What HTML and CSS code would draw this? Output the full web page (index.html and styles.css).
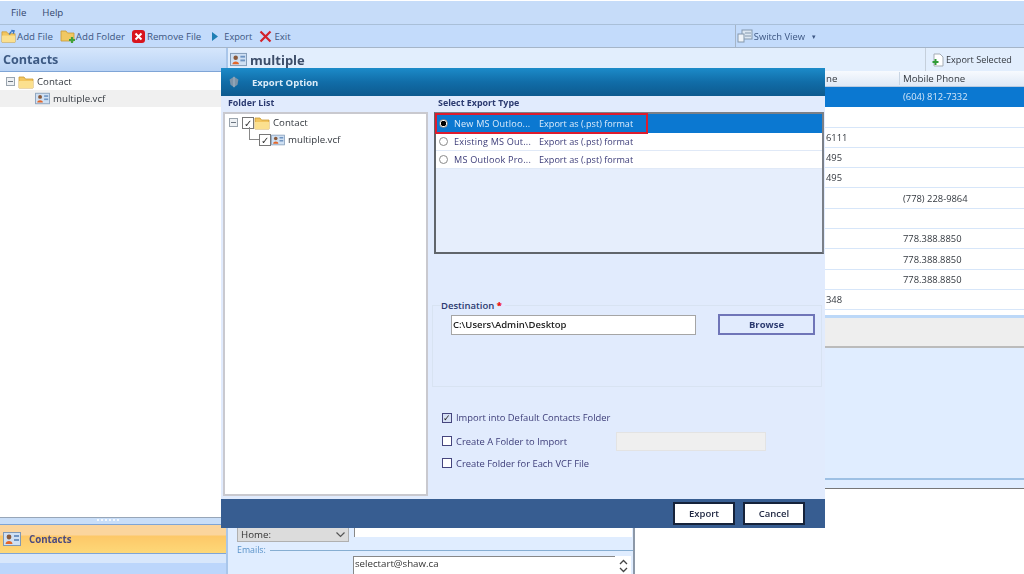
FILE: index.html
```html
<!DOCTYPE html>
<html lang="en">
<head>
<meta charset="utf-8">
<title>Export Option</title>
<link rel="stylesheet" href="styles.css">
</head>
<body>
<svg class="defs" width="0" height="0" aria-hidden="true">
  <defs>
    <symbol id="folder" viewBox="0 0 16 14"><path d="M1 2h5l1.500 2H15v9H1z" fill="#f3c65f" stroke="#c99a35" stroke-width=".8"/><path d="M1 6h14v7H1z" fill="#fbe08f"/></symbol>
    <symbol id="card" viewBox="0 0 18 16"><rect x=".5" y="1.500" width="17" height="13" fill="#cfe0f3" stroke="#7f98b5"/><rect x="11" y="4" width="5" height="2" fill="#6f94c2"/><rect x="11" y="8" width="5" height="2" fill="#6f94c2"/><circle cx="6" cy="6" r="2.400" fill="#8a5a3c"/><path d="M2.500 13c0-4 7-4 7 0z" fill="#e2662a"/></symbol>
  </defs>
</svg>

<nav class="menubar"><span>File</span><span>Help</span></nav>

<div class="toolbar">
  <span class="tool"><svg width="15" height="15" viewBox="0 0 16 14"><use href="#folder"/><path d="M9 5c1-3 3-4 5-4M11 .5l3 .5-1 3" fill="none" stroke="#3a76c4" stroke-width="1.400"/></svg>Add File</span>
  <span class="tool tool-folder"><svg width="16" height="16" viewBox="0 0 16 16"><path d="M1 3h5l1.500 2H14v8H1z" fill="#f1c862" stroke="#c99a35" stroke-width=".8"/><path d="M12 9v6M9 12h6" stroke="#3fa33c" stroke-width="2.200"/></svg>Add Folder</span>
  <span class="tool tool-remove"><svg width="13" height="13" viewBox="0 0 13 13"><rect width="13" height="13" rx="3" fill="#d8141d"/><path d="M3.500 3.500l6 6M9.500 3.500l-6 6" stroke="#fff" stroke-width="2"/></svg>Remove File</span>
  <span class="tool tool-export"><svg width="6" height="9" viewBox="0 0 6 9"><path d="M0 0l6 4.500L0 9z" fill="#1f7fb5"/></svg>Export</span>
  <span class="tool tool-exit"><svg width="13" height="13" viewBox="0 0 13 13"><path d="M1.500 1.500l10 10M11.500 1.500l-10 10" stroke="#d3222a" stroke-width="2.200"/></svg>Exit</span>
  <span class="switch"><svg width="16" height="14" viewBox="0 0 16 14"><rect x="5" y="1" width="10" height="9" fill="#dce7f2" stroke="#8498ad"/><rect x="1" y="5" width="6" height="8" fill="#eef3f8" stroke="#8498ad"/><path d="M8 4h6M8 7h6" stroke="#8498ad"/></svg>Switch View<i class="caret">▾</i></span>
</div>

<main class="workspace">
  <aside class="sidebar">
    <h2 class="side-title">Contacts</h2>
    <div class="side-tree">
      <div class="side-row"><i class="expander"></i><svg width="16" height="14"><use href="#folder"/></svg>Contact</div>
      <div class="side-row side-row-sel"><svg width="15" height="13"><use href="#card"/></svg>multiple.vcf</div>
    </div>
    <div class="splitter"><i></i></div>
    <div class="side-tab"><svg width="18" height="16"><use href="#card"/></svg>Contacts</div>
    <div class="side-strip"></div>
  </aside>

  <section class="content">
    <header class="content-head">
      <h2><svg width="17" height="15"><use href="#card"/></svg>multiple</h2>
      <span class="export-selected"><svg width="13" height="14" viewBox="0 0 13 14"><path d="M2 1h6l3 3v9H2z" fill="#fff" stroke="#a5adb5"/><path d="M3.500 6v6M.500 9h6" stroke="#2f9b37" stroke-width="2"/></svg>Export Selected</span>
    </header>
    <div class="grid-area">
      <div class="grid-head"><span class="col-a">ne</span><span class="col-b">Mobile Phone</span></div>
      <div class="grid-row grid-row-sel"><span class="col-a"></span><span class="col-b">(604) 812-7332</span></div>
      <div class="grid-row"><span class="col-a"></span><span class="col-b"></span></div>
      <div class="grid-row"><span class="col-a">6111</span><span class="col-b"></span></div>
      <div class="grid-row"><span class="col-a">495</span><span class="col-b"></span></div>
      <div class="grid-row"><span class="col-a">495</span><span class="col-b"></span></div>
      <div class="grid-row"><span class="col-a"></span><span class="col-b">(778) 228-9864</span></div>
      <div class="grid-row"><span class="col-a"></span><span class="col-b"></span></div>
      <div class="grid-row"><span class="col-a"></span><span class="col-b">778.388.8850</span></div>
      <div class="grid-row"><span class="col-a"></span><span class="col-b">778.388.8850</span></div>
      <div class="grid-row"><span class="col-a"></span><span class="col-b">778.388.8850</span></div>
      <div class="grid-row"><span class="col-a">348</span><span class="col-b"></span></div>
      <div class="grid-gap"></div>
      <div class="grid-band"></div>
      <div class="grid-blue"></div>
      <div class="grid-foot"></div>
    </div>
    <div class="detail">
      <div class="detail-form">
        <div class="detail-home"><span class="home-select">Home:<svg width="9" height="6" viewBox="0 0 9 6"><path d="M.5.500l4 4 4-4" fill="none" stroke="#555" stroke-width="1.200"/></svg></span><span class="home-input"></span></div>
        <div class="emails"><span>Emails:</span><i></i></div>
        <div class="email-row"><span class="email-box">selectart@shaw.ca</span><span class="spin"><svg width="9" height="14" viewBox="0 0 9 14"><path d="M1 5l3.500-3.500L8 5M1 9l3.500 3.500L8 9" fill="none" stroke="#444" stroke-width="1.300"/></svg></span></div>
      </div>
    </div>
  </section>
</main>

<div class="dialog">
  <div class="dialog-title"><svg width="14" height="16" viewBox="0 0 16 16"><path d="M3 5l5-3 5 3-1 6-4 3-4-3z" fill="#7d93a8"/><path d="M8 2v12" stroke="#a9bac9"/></svg>Export Option</div>
  <div class="dialog-body">
    <div class="folder-col">
      <h3>Folder List</h3>
      <div class="folder-tree">
        <div class="ft-row"><i class="expander"></i><i class="tree-check">✓</i><svg width="16" height="14"><use href="#folder"/></svg><span>Contact</span></div>
        <div class="ft-row ft-child"><i class="elbow"></i><i class="tree-check">✓</i><svg width="14" height="12"><use href="#card"/></svg><span>multiple.vcf</span></div>
      </div>
    </div>
    <div class="type-col">
      <h3>Select Export Type</h3>
      <div class="type-list">
        <div class="type-row type-row-sel"><i class="radio radio-on"></i><span class="type-name">New MS Outloo...</span><span>Export as (.pst) format</span></div>
        <div class="type-row"><i class="radio"></i><span class="type-name">Existing MS Out...</span><span>Export as (.pst) format</span></div>
        <div class="type-row"><i class="radio"></i><span class="type-name">MS Outlook Pro...</span><span>Export as (.pst) format</span></div>
      </div>
      <div class="dest">
        <div class="dest-label">Destination <b>*</b></div>
        <div class="dest-row"><span class="dest-input">C:\Users\Admin\Desktop</span><span class="browse">Browse</span></div>
      </div>
      <div class="options">
        <div class="opt"><i class="check check-on">✓</i>Import into Default Contacts Folder</div>
        <div class="opt"><i class="check"></i><span class="opt-name">Create A Folder to Import</span><span class="opt-input"></span></div>
        <div class="opt"><i class="check"></i>Create Folder for Each VCF File</div>
      </div>
    </div>
  </div>
  <div class="dialog-foot"><span class="foot-btn">Export</span><span class="foot-btn">Cancel</span></div>
</div>

<div class="highlight"></div>
</body>
</html>
```

FILE: styles.css
```css
* { box-sizing: border-box; }
html, body { margin: 0; padding: 0; }
body {
  width: 1024px;
  height: 574px;
  overflow: hidden;
  background: #fff;
  font: 9.700px "Open Sans", "Noto Sans", sans-serif;
  color: #2b2b55;
  position: relative;
  filter: blur(.45px);
}
svg { flex: none; }
i { font-style: normal; }
h2, h3 { margin: 0; }
.defs { position: absolute; }

.menubar {
  height: 24px;
  margin-top: 1px;
  background: #c6dcf9;
  border-bottom: 1px solid #a9bfd8;
  display: flex;
  align-items: center;
  gap: 16px;
  padding: 0 11px 1px;
  color: #33466e;
}
.toolbar {
  height: 23px;
  background: #c3dbfb;
  border-bottom: 1px solid #a5b5c8;
  display: flex;
  align-items: center;
  padding-left: 1px;
  color: #3c5682;
}
.tool { display: flex; align-items: center; gap: 1px; margin-right: 7px; white-space: nowrap; }
.tool-folder { gap: 0; }
.tool-remove { gap: 2px; }
.tool-export { gap: 6px; margin-left: 4px; margin-right: 7px; font-size: 9.200px; }
.tool-exit { gap: 2px; }
.switch {
  margin-left: 437px;
  height: 100%;
  display: flex;
  align-items: center;
  gap: 1px;
  border-left: 1px solid #a5b5c8;
  padding-left: 1px;
  font-size: 9.400px;
}
.caret { margin-left: 6px; font-size: 7px; }

.workspace { display: flex; height: 526px; }
.sidebar { width: 226px; flex: none; display: flex; flex-direction: column; }
.side-title {
  height: 24px;
  flex: none;
  background: linear-gradient(#d5e6fc, #b9d3f5);
  border-bottom: 1px solid #7fa5d6;
  font-size: 12.600px;
  font-weight: 700;
  color: #3d5a84;
  padding: 3px 3px 0;
}
.side-tree { flex: 1; background: #fff; padding-top: 1px; color: #33383f; }
.side-row { height: 17px; display: flex; align-items: center; gap: 3px; padding-left: 6px; }
.side-row-sel { background: #f0f0f0; padding-left: 35px; }
.expander {
  width: 9px; height: 9px;
  border: 1px solid #9aa4ae;
  background: linear-gradient(90deg, transparent 1px, #6d7782 1px, #6d7782 6px, transparent 6px) center / 100% 1px no-repeat #eef1f4;
  display: block;
  flex: none;
}
.splitter {
  height: 8px;
  flex: none;
  background: #c9def8;
  border-top: 1px solid #97a6b8;
  border-bottom: 1px solid #7fa5d6;
  position: relative;
}
.splitter i {
  position: absolute; left: 97px; top: 1px;
  width: 24px; height: 2px;
  background: repeating-linear-gradient(90deg, #f4f8fd 0 2px, transparent 2px 4px);
}
.side-tab {
  height: 29px;
  flex: none;
  background: linear-gradient(#fbd59d 0, #fbd59d 35%, #fdc868 40%, #fdd878 100%);
  border-bottom: 1px solid #7fa5d6;
  display: flex;
  align-items: center;
  gap: 8px;
  padding-left: 3px;
  font-weight: 700;
  color: #4a4a80;
}
.side-strip { height: 20px; flex: none; background: linear-gradient(#d8e7fb 0, #d8e7fb 45%, #bcd6fb 45%); }

.content { flex: 1; display: flex; flex-direction: column; border-left: 2px solid #a9c6ea; min-width: 0; }
.content-head {
  height: 23px;
  flex: none;
  background: #e2eefd;
  display: flex;
  align-items: center;
  justify-content: space-between;
  padding: 0 4px 0 2px;
}
.content-head h2 {
  display: flex; align-items: center; gap: 3px;
  font-size: 13px; color: #3d4e6a; font-weight: 700;
}
.export-selected {
  display: flex; align-items: center; gap: 1px;
  height: 100%;
  padding: 0 0 0 6px;
  border-left: 1px solid #c5cfdb;
  color: #33383f;
  width: 95px;
  font-size: 9.100px;
  white-space: nowrap;
}
.grid-area { flex: none; height: 418px; display: flex; flex-direction: column; }
.grid-head, .grid-row { display: flex; flex: none; }
.grid-head {
  height: 16px;
  background: linear-gradient(#f7fafe, #dfe9f6);
  border-bottom: 1px solid #b9cbe0;
  align-items: center;
  color: #33383f;
}
.grid-row {
  height: 20.300px;
  align-items: center;
  background: #fff;
  border-bottom: 1px solid #d7e6f9;
  color: #33383f;
  font-size: 9.400px;
}
.grid-row-sel { background: #0b78d1; color: #d4e6f8; border-bottom-color: #0b78d1; }
.col-a { width: 672px; padding-left: 598px; }
.grid-head .col-a { border-right: 1px solid #c9d5e3; }
.col-b { padding-left: 3px; }
.grid-gap { height: 8px; background: #fff; flex: none; border-bottom: 3px solid #bcd8f8; }
.grid-band { height: 30px; flex: none; background: #eeeeee; border-bottom: 2px solid #bbb; }
.grid-blue { flex: 1; background: #e0edff; border-bottom: 2px solid #9dc0e4; }
.grid-foot { height: 9px; flex: none; background: #e0edff; border-bottom: 1px solid #777; }

.detail { flex: 1; background: #fff; display: flex; }
.detail-form {
  width: 407px;
  height: 100%;
  background: #e0edff;
  border-right: 2px solid #8c98a8;
  padding: 38px 0 0 9px;
}
.detail-home { display: flex; gap: 5px; height: 16px; }
.home-select {
  width: 112px; height: 15px;
  background: #dcdcdc; border: 1px solid #b0b0b0;
  display: flex; align-items: center; justify-content: space-between;
  padding: 0 3px; color: #333;
}
.home-input { width: 278px; height: 10px; background: #fff; border-left: 1px solid #888; }
.emails { display: flex; align-items: center; gap: 4px; color: #5a93c9; height: 14px; font-size: 8.800px; }
.emails i { flex: 1; height: 1px; background: #86aed2; }
.email-row { display: flex; margin: -1px 2px 0 116px; background: #fff; height: 24px; }
.email-box { flex: 1; color: #333; border-left: 1px solid #888; border-top: 1px solid #888; padding-left: 1px; }
.spin { width: 16px; display: flex; justify-content: center; padding-top: 3px; }

.dialog {
  position: absolute;
  left: 221px; top: 68px;
  width: 604px; height: 460px;
  background: #e1ebfd;
  display: flex;
  flex-direction: column;
}
.dialog-title {
  height: 28px; flex: none;
  background: linear-gradient(#1c8bc9 0, #116da8 50%, #0d5a8f 100%);
  color: #dcecf8;
  font-weight: 700;
  font-size: 9.500px;
  display: flex; align-items: center; gap: 11px;
  padding-left: 6px;
}
.dialog-body { flex: 1; display: flex; min-height: 0; }
.folder-col { width: 207px; padding: 0 0 3px 2px; display: flex; flex-direction: column; flex: none; }
.dialog-body h3 { font-size: 8.900px; font-weight: 700; color: #2b3a70; height: 16px; padding: 0 0 0 5px; }
.folder-tree {
  flex: 1;
  background: #fff;
  border: 2px solid #c9c9cf;
  color: #33383f;
}
.ft-row { display: flex; align-items: center; height: 17px; padding-left: 4px; }
.ft-row span { margin-left: 3px; }
.ft-child { padding-left: 32px; position: relative; }
.tree-check {
  width: 12px; height: 12px;
  border: 1px solid #777;
  display: flex; align-items: center; justify-content: center;
  font-size: 10px; line-height: 1; color: #333;
  margin: 0 0 0 4px;
  flex: none;
}
.ft-child .tree-check { margin-left: 2px; }
.elbow {
  position: absolute; left: 24px; top: -4px;
  width: 10px; height: 13px;
  border-left: 1px solid #888; border-bottom: 1px solid #888;
}
.type-col { flex: 1; padding: 0 0 0 5px; display: flex; flex-direction: column; }
.type-col h3 { padding-left: 5px; }
.type-list {
  height: 142px; flex: none;
  width: 390px;
  margin-left: 1px;
  background: #e6eefc;
  border: 2px solid #7b8088;
  border-bottom-color: #60656b;
  border-left-color: #60656b;
}
.type-row {
  height: 18px;
  display: flex; align-items: center;
  background: #fff;
  border-bottom: 1px solid #e0e9f7;
  color: #3c3c78;
  padding-left: 3px;
  font-size: 9.100px;
}
.type-row-sel { background: #0b78d1; color: #dcecfb; border-bottom-color: #0b78d1; height: 19px; }
.radio {
  width: 9px; height: 9px;
  border-radius: 50%;
  border: 1px solid #8a8a8a;
  background: #fff;
  flex: none;
  margin-right: 6px;
}
.radio-on { background: radial-gradient(circle, #000 0 2.500px, #fff 3px); }
.type-name { width: 85px; flex: none; letter-spacing: .2px; white-space: nowrap; }

.dest {
  margin: 51px 3px 0 -1px;
  height: 82px;
  position: relative;
  border: 1px solid #d8e3f2;
  padding: 8px 6px 0 18px;
}
.dest-label {
  position: absolute; left: 8px; top: -7px;
  font-weight: 600; color: #2b3a70; font-size: 9.500px;
  background: #e1ebfd;
  padding-right: 3px;
}
.dest-label b { color: #e11; }
.dest-row { display: flex; align-items: center; justify-content: space-between; }
.dest-input {
  width: 245px; height: 20px;
  background: #fff;
  border: 1px solid #a5a5a5;
  color: #222;
  font-weight: 600;
  padding: 2px 0 0 1px;
  font-size: 9.500px;
}
.browse {
  width: 97px; height: 21px;
  border: 2px solid #6f75b8;
  background: #e1ebfd;
  display: flex; align-items: center; justify-content: center;
  font-weight: 700; font-size: 9.500px; color: #2b3a70;
}
.options { padding: 18px 0 0 9px; display: flex; flex-direction: column; font-size: 9.400px; }
.opt { display: flex; align-items: center; height: 22px; color: #3c3c78; }
.opt:first-child { height: 25px; }
.check {
  width: 10px; height: 10px;
  border: 1px solid #45457e;
  background: #fff;
  margin-right: 4px; flex: none;
  font-size: 9px; line-height: 8px;
  text-align: center;
}
.check-on { background: #d6e0f4; color: #222; }
.opt-name { width: 160px; flex: none; }
.opt-input { width: 150px; height: 19px; background: #efefef; border: 1px solid #e3e3e3; }

.dialog-foot {
  height: 29px; flex: none;
  background: #375d91;
  display: flex; align-items: center; justify-content: flex-end;
  gap: 8px;
  padding: 0 20px 1px 0;
}
.foot-btn {
  width: 62px; height: 23px;
  background: #fff;
  border: 2px solid #15223a;
  display: flex; align-items: center; justify-content: center;
  color: #222a44;
  font-weight: 600;
  font-size: 9.500px;
}
.highlight {
  position: absolute;
  left: 435px; top: 113px;
  width: 213px; height: 21px;
  border: 2.500px solid #dd1c2e;
}
```
